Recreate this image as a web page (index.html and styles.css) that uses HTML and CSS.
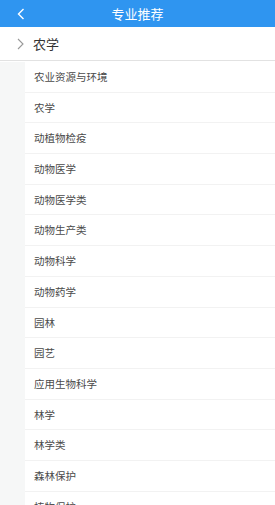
FILE: index.html
```html
<!DOCTYPE html>
<html>
<head>
  <meta charset="utf-8">
  <link rel="stylesheet" href="styles.css">
</head>
<body>
  <div class="header">
    <span class="back">
      <svg width="8" height="12" viewBox="0 0 8 12"><path d="M6.5 1 L1.5 6 L6.5 11" fill="none" stroke="#fff" stroke-width="1.4"/></svg>
    </span>
    <h1>专业推荐</h1>
  </div>

  <div class="group">
    <svg class="arrow" width="7" height="12" viewBox="0 0 7 12"><path d="M1 1 L6 6 L1 11" fill="none" stroke="#999" stroke-width="1.1"/></svg>
    <span>农学</span>
  </div>

  <div class="list">
    <div class="items">
      <div class="item">农业资源与环境</div>
      <div class="item">农学</div>
      <div class="item">动植物检疫</div>
      <div class="item">动物医学</div>
      <div class="item">动物医学类</div>
      <div class="item">动物生产类</div>
      <div class="item">动物科学</div>
      <div class="item">动物药学</div>
      <div class="item">园林</div>
      <div class="item">园艺</div>
      <div class="item">应用生物科学</div>
      <div class="item">林学</div>
      <div class="item">林学类</div>
      <div class="item">森林保护</div>
      <div class="item">植物保护</div>
    </div>
  </div>
</body>
</html>
```

FILE: styles.css
```css
body {
  margin: 0;
  width: 275px;
  height: 505px;
  overflow: hidden;
  background: #fff;
  font-family: "Noto Sans CJK SC", "Noto Sans", sans-serif;
}
.header {
  height: 27px;
  background: #2f95f0;
  display: flex;
  align-items: center;
  justify-content: center;
  position: relative;
}
.header h1 {
  margin: 0;
  font-size: 13px;
  font-weight: normal;
  color: #fff;
}
.back {
  position: absolute;
  left: 17px;
  top: 8px;
  display: flex;
}
.group {
  height: 33px;
  display: flex;
  align-items: center;
  padding-left: 17px;
  gap: 9px;
  font-size: 13px;
  color: #333;
  border-bottom: 1px solid #e2e2e2;
}
.list {
  margin-top: 1px;
  padding-left: 25px;
  background: #f6f7f7;
}
.items {
  background: #fff;
}
.item {
  height: 29.7px;
  line-height: 29.7px;
  padding-left: 9px;
  font-size: 10.5px;
  color: #4a4a4a;
  border-bottom: 1px solid #f2f2f2;
}
```
